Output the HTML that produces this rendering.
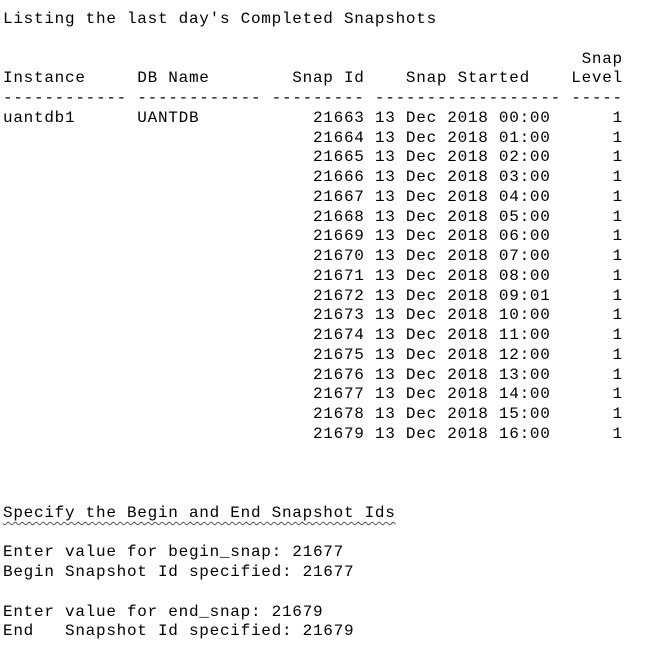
<!DOCTYPE html>
<html><head><meta charset="utf-8"><style>
html,body{margin:0;padding:0;background:#fff;width:668px;height:651px;overflow:hidden}
pre{margin:0;position:absolute;left:3px;top:10px;font-family:"Liberation Mono","Noto Sans CJK SC",monospace;font-size:16px;letter-spacing:0.73px;line-height:19.75px;color:#000}
.w{text-decoration:underline wavy #555;text-decoration-thickness:1px;text-underline-offset:4px}
</style></head><body><pre>Listing the last day's Completed Snapshots

                                                        Snap
Instance     DB Name        Snap Id    Snap Started    Level
------------ ------------ --------- ------------------ -----
uantdb1      UANTDB           21663 13 Dec 2018 00:00      1
                              21664 13 Dec 2018 01:00      1
                              21665 13 Dec 2018 02:00      1
                              21666 13 Dec 2018 03:00      1
                              21667 13 Dec 2018 04:00      1
                              21668 13 Dec 2018 05:00      1
                              21669 13 Dec 2018 06:00      1
                              21670 13 Dec 2018 07:00      1
                              21671 13 Dec 2018 08:00      1
                              21672 13 Dec 2018 09:01      1
                              21673 13 Dec 2018 10:00      1
                              21674 13 Dec 2018 11:00      1
                              21675 13 Dec 2018 12:00      1
                              21676 13 Dec 2018 13:00      1
                              21677 13 Dec 2018 14:00      1
                              21678 13 Dec 2018 15:00      1
                              21679 13 Dec 2018 16:00      1



<span class="w">Specify the Begin and End Snapshot Ids</span>

Enter value for begin_snap: 21677
Begin Snapshot Id specified: 21677

Enter value for end_snap: 21679
End   Snapshot Id specified: 21679</pre></body></html>
